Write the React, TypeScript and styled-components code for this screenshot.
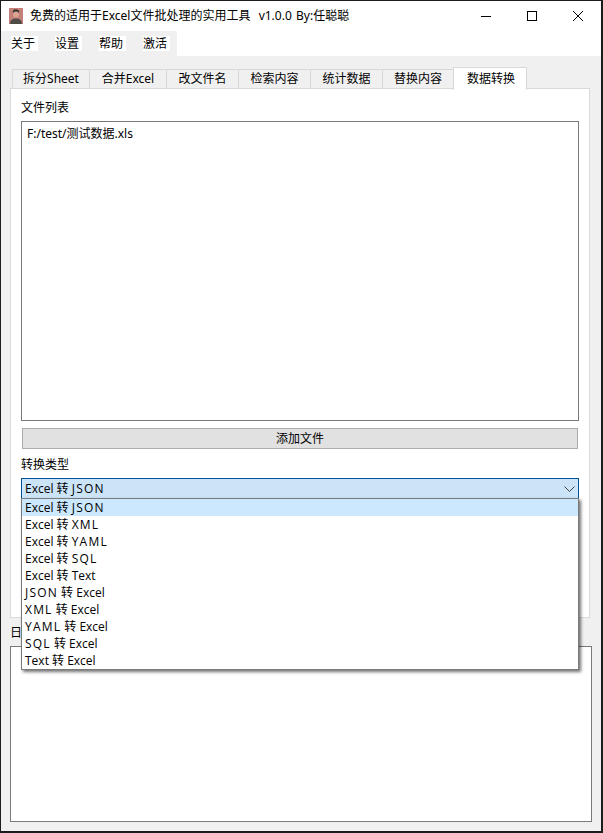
import React from "react";
import styled, { createGlobalStyle } from "styled-components";

const Global = createGlobalStyle`
  html, body { margin: 0; padding: 0; background: #1a1a1a; }
  * { box-sizing: border-box; }
`;

const Frame = styled.div`
  width: 603px;
  height: 833px;
  display: flex;
  flex-direction: column;
  border-style: solid;
  border-color: #1c1c1c;
  border-width: 1px 2px 2px 1px;
  background: #fff;
  font-family: "Noto Sans", "Noto Sans CJK SC", sans-serif;
  font-size: 12px;
  line-height: 16px;
  color: #000;
  overflow: hidden;
`;

const TitleBar = styled.div`
  height: 30px;
  flex: none;
  display: flex;
  align-items: center;
  padding-left: 8px;
`;

const AppIcon = styled.svg`
  width: 14px;
  height: 16px;
  flex: none;
`;

const TitleText = styled.div`
  margin-left: 7px;
  flex: 1;
  font-size: 12px;
  white-space: pre;
`;

const TitleVersion = styled.span`
  margin-left: 2px;
  margin-right: -2px;
`;

const WinButton = styled.div`
  width: 46px;
  height: 30px;
  display: flex;
  align-items: center;
  justify-content: center;
`;

const MenuRow = styled.div`
  height: 25px;
  flex: none;
  display: flex;
`;

const MenuBar = styled.div`
  width: 176px;
  background: #f0f0f0;
  display: flex;
  gap: 17px;
  padding: 5px 0 0 10px;
`;

const MenuItem = styled.div`
  width: 27px;
  height: 15px;
  background: #fff;
  text-align: left;
  line-height: 15px;
`;

const Body = styled.div`
  flex: 1;
  background: #f0f0f0;
  display: flex;
  flex-direction: column;
  padding: 10px 9px 9px 9px;
  min-height: 0;
`;

const TabStrip = styled.div`
  height: 23px;
  flex: none;
  display: flex;
  align-items: flex-end;
  padding-left: 2px;
  position: relative;
  z-index: 1;
`;

const Tab = styled.div<{ $w: number; $active?: boolean }>`
  width: ${(p) => p.$w}px;
  height: ${(p) => (p.$active ? 23 : 20)}px;
  margin-bottom: ${(p) => (p.$active ? -1 : 0)}px;
  background: ${(p) => (p.$active ? "#fff" : "#f0f0f0")};
  border: 1px solid #d9d9d9;
  border-right-width: ${(p) => (p.$active ? 1 : 0)}px;
  border-bottom-width: ${(p) => (p.$active ? 0 : 1)}px;
  text-align: center;
  padding: ${(p) => (p.$active ? "2px 0 0 2px" : "0")};
  line-height: 18px;
  white-space: nowrap;
`;

const Pane = styled.div`
  width: 580px;
  height: 530px;
  flex: none;
  margin-top: -1px;
  background: #fff;
  border: 1px solid #d9d9d9;
  padding: 11px 10px 0 10px;
  display: flex;
  flex-direction: column;
`;

const FieldLabel = styled.div`
  height: 21px;
  flex: none;
  line-height: 16px;
`;

const ListBox = styled.div`
  width: 558px;
  height: 300px;
  flex: none;
  border: 1px solid #7a7a7a;
  padding: 4px 5px;
  background: #fff;
`;

const AddButton = styled.div`
  width: 556px;
  height: 21px;
  flex: none;
  margin: 7px 0 0 1px;
  background: #e1e1e1;
  border: 1px solid #adadad;
  text-align: center;
  line-height: 19px;
`;

const TypeLabel = styled(FieldLabel)`
  height: 21px;
  margin-top: 8px;
`;

const ComboWrap = styled.div`
  position: relative;
  width: 558px;
  height: 20px;
  flex: none;
  z-index: 5;
`;

const ComboField = styled.div`
  height: 21px;
  display: flex;
  align-items: center;
  justify-content: space-between;
  background: #cce4f7;
  border: 1px solid #005499;
  padding: 0 3px;
  font-family: "Open Sans", "Noto Sans CJK SC", sans-serif;
`;

const Dropdown = styled.div`
  position: absolute;
  left: 0;
  top: 20px;
  width: 558px;
  height: 172px;
  background: #fff;
  border: 1px solid #7a7a7a;
  box-shadow: 2px 2px 3px rgba(0, 0, 0, 0.55);
  font-family: "Open Sans", "Noto Sans CJK SC", sans-serif;
`;

const Option = styled.div<{ $current?: boolean }>`
  height: 17px;
  line-height: 17px;
  padding-left: 3px;
  background: ${(p) => (p.$current ? "#cce8ff" : "transparent")};
  white-space: nowrap;
`;

const Caps = styled.span`
  letter-spacing: 1.2px;
`;

const LogLabel = styled.div`
  height: 21px;
  width: fit-content;
  flex: none;
  margin-top: 7px;
`;

const LogBox = styled.div`
  width: 582px;
  flex: 1;
  border: 1px solid #7a7a7a;
  background: #fff;
`;

const tabs: [string, number][] = [
  ["拆分Sheet", 77],
  ["合并Excel", 77],
  ["改文件名", 72],
  ["检索内容", 72],
  ["统计数据", 72],
  ["替换内容", 71],
];

const options = [
  "Excel 转 JSON",
  "Excel 转 XML",
  "Excel 转 YAML",
  "Excel 转 SQL",
  "Excel 转 Text",
  "JSON 转 Excel",
  "XML 转 Excel",
  "YAML 转 Excel",
  "SQL 转 Excel",
  "Text 转 Excel",
];

function FormatName({ text }: { text: string }) {
  return (
    <>
      {text.split(/([A-Z]{3,})/).map((part, i) =>
        i % 2 === 1 ? <Caps key={i}>{part}</Caps> : <span key={i}>{part}</span>
      )}
    </>
  );
}

export default function App() {
  return (
    <>
      <Global />
      <Frame>
        <TitleBar>
          <AppIcon viewBox="0 0 14 16">
            <rect width="14" height="16" fill="#c5807a" />
            <ellipse cx="7" cy="6" rx="3" ry="3.6" fill="#d9a58f" />
            <path d="M3.8 5.5C3.6 2 5 1.4 7 1.4s3.4.8 3.2 4.1C9.5 3.8 8 3.6 7 3.6s-2.5.2-3.2 1.9z" fill="#2f2a28" />
            <path d="M1 16c0-4 2.5-5.6 6-5.6s6 1.6 6 5.6z" fill="#4f4b46" />
          </AppIcon>
          <TitleText>免费的适用于Excel文件批处理的实用工具  <TitleVersion>v1.0.0</TitleVersion>  By:任聪聪</TitleText>
          <WinButton>
            <svg width="10" height="10" viewBox="0 0 10 10"><path d="M0 5.5h10" stroke="#000" fill="none" /></svg>
          </WinButton>
          <WinButton>
            <svg width="10" height="10" viewBox="0 0 10 10"><rect x=".5" y=".5" width="9" height="9" stroke="#000" fill="none" /></svg>
          </WinButton>
          <WinButton>
            <svg width="10" height="10" viewBox="0 0 10 10"><path d="M0 0l10 10M10 0L0 10" stroke="#000" strokeWidth="1" fill="none" /></svg>
          </WinButton>
        </TitleBar>
        <MenuRow>
          <MenuBar>
            <MenuItem>关于</MenuItem>
            <MenuItem>设置</MenuItem>
            <MenuItem>帮助</MenuItem>
            <MenuItem>激活</MenuItem>
          </MenuBar>
        </MenuRow>
        <Body>
          <TabStrip>
            {tabs.map(([t, w]) => (
              <Tab key={t} $w={w}>{t}</Tab>
            ))}
            <Tab $w={74} $active>数据转换</Tab>
          </TabStrip>
          <Pane>
            <FieldLabel>文件列表</FieldLabel>
            <ListBox>F:/test/测试数据.xls</ListBox>
            <AddButton>添加文件</AddButton>
            <TypeLabel>转换类型</TypeLabel>
            <ComboWrap>
              <ComboField>
                <span><FormatName text="Excel 转 JSON" /></span>
                <svg width="11" height="6" viewBox="0 0 11 6">
                  <path d="M.5.5l5 5 5-5" stroke="#444" fill="none" />
                </svg>
              </ComboField>
              <Dropdown>
                {options.map((o, i) => (
                  <Option key={o} $current={i === 0}><FormatName text={o} /></Option>
                ))}
              </Dropdown>
            </ComboWrap>
          </Pane>
          <LogLabel>日</LogLabel>
          <LogBox />
        </Body>
      </Frame>
    </>
  );
}
